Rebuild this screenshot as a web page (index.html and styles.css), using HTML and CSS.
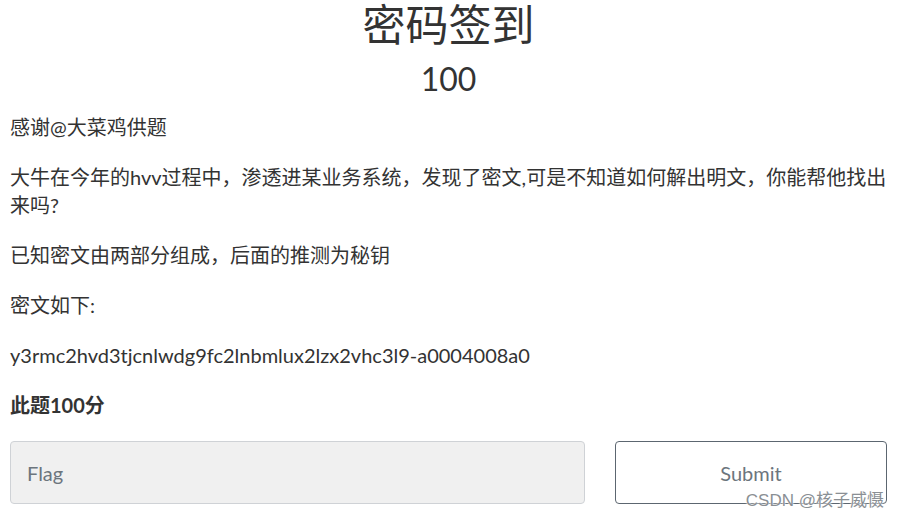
FILE: index.html
```html
<!DOCTYPE html>
<html lang="zh-CN">
<head>
    <meta charset="UTF-8">
    <meta name="viewport" content="width=device-width, initial-scale=1.0">
    <title>密码签到</title>
    <link rel="stylesheet" href="styles.css">
</head>
<body>
    <div class="challenge">
        <h2 class="challenge-name">密码签到</h2>
        <h3 class="challenge-value">100</h3>
        <div class="challenge-desc">
            <p>感谢@大菜鸡供题</p>
            <p>大牛在今年的hvv过程中，渗透进某业务系统，发现了密文,可是不知道如何解出明文，你能帮他找出来吗?</p>
            <p>已知密文由两部分组成，后面的推测为秘钥</p>
            <p>密文如下:</p>
            <p>y3rmc2hvd3tjcnlwdg9fc2lnbmlux2lzx2vhc3l9-a0004008a0</p>
            <p class="score">此题100分</p>
        </div>
        <form class="submit-row">
            <input type="text" class="flag-input" placeholder="Flag">
            <button type="submit" class="submit-btn">Submit</button>
        </form>
    </div>
    <div class="watermark">CSDN @核子威慑</div>
</body>
</html>
```

FILE: styles.css
```css
body {
    font-family: Lato, "Noto Sans CJK SC", sans-serif;
    color: #333;
    background-color: white;
    margin: 0;
    padding: 0;
}
.challenge {
    padding: 0 10px;
}
.challenge-name {
    font-size: 43px;
    font-weight: normal;
    line-height: 50px;
    text-align: center;
    margin: 0;
}
.challenge-value {
    font-size: 32px;
    font-weight: normal;
    line-height: 40px;
    text-align: center;
    margin: 9px 0 0 0;
}
.challenge-desc {
    font-size: 20px;
    line-height: 28px;
    margin-top: 14px;
}
.challenge-desc p {
    margin: 0 0 22px 0;
}
.score {
    font-weight: bold;
}
.submit-row {
    display: flex;
    gap: 30px;
    margin-top: 5px;
}
.flag-input {
    width: 575px;
    height: 63px;
    box-sizing: border-box;
    padding: 0 16px;
    font-family: Lato, sans-serif;
    font-size: 20px;
    color: #333;
    background-color: #f0f0f0;
    border: 1px solid #cfd2d6;
    border-radius: 4px;
}
.flag-input::placeholder {
    color: #6c757d;
}
.submit-btn {
    width: 272px;
    height: 63px;
    font-family: Lato, sans-serif;
    font-size: 20px;
    color: #6c757d;
    background-color: white;
    border: 1px solid #5c6670;
    border-radius: 4px;
    cursor: pointer;
}
.watermark {
    position: absolute;
    right: 13px;
    top: 486px;
    font-family: "Liberation Sans", "Noto Sans CJK SC", sans-serif;
    font-size: 17px;
    color: #8a8f94;
    text-shadow: 0 0 2px white, 0 0 2px white;
}
```
